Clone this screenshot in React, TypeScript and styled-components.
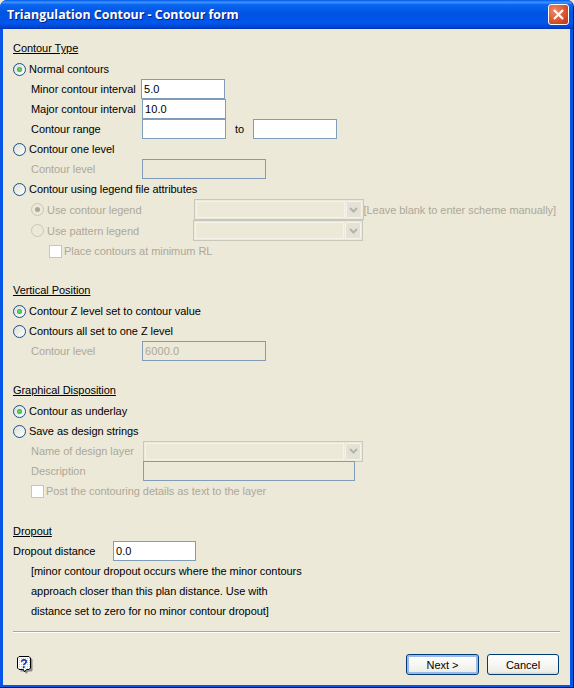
import React from "react";
import styled, { createGlobalStyle } from "styled-components";

const Global = createGlobalStyle`
  html, body {
    margin: 0;
    padding: 0;
    background: #ece9d8;
  }
  body {
    font-family: "Liberation Sans", Arial, sans-serif;
    font-size: 11px;
    letter-spacing: -0.05px;
    color: #000;
  }
`;

const Frame = styled.div`
  width: 574px;
  height: 688px;
  display: flex;
  flex-direction: column;
  box-sizing: border-box;
  background: #0655e6;
  border-radius: 7px 7px 0 0;
  border-right: 1px solid #001a8c;
  border-bottom: 1px solid #001a8c;
  overflow: hidden;
`;

const TitleBar = styled.div`
  height: 29px;
  flex: none;
  display: flex;
  align-items: center;
  justify-content: space-between;
  padding: 0 4px 0 7px;
  background: linear-gradient(
    180deg,
    #0058ee 0%,
    #3d95ff 8%,
    #0a66f0 16%,
    #0054e3 45%,
    #0055eb 80%,
    #0048d0 92%,
    #0033b8 100%
  );
`;

const TitleText = styled.span`
  font-family: "Open Sans", "Liberation Sans", sans-serif;
  font-weight: 700;
  font-size: 12.4px;
  letter-spacing: 0;
  color: #fff;
  text-shadow: 1px 1px 0 #0a1f7a;
`;

const CloseButton = styled.div`
  width: 21px;
  height: 21px;
  box-sizing: border-box;
  border: 1px solid #fff;
  border-radius: 3px;
  background: radial-gradient(circle at 30% 30%, #ee8a6a, #d9502a 60%, #b83512);
  display: flex;
  align-items: center;
  justify-content: center;
`;

const Client = styled.div`
  flex: 1;
  margin: 0 3px 2px 3px;
  padding: 9px 10px 0 10px;
  background: #ece9d8;
  display: flex;
  flex-direction: column;
`;

const Section = styled.div<{ $gap?: number }>`
  display: flex;
  flex-direction: column;
  margin-bottom: ${(p) => p.$gap ?? 0}px;
`;

const Heading = styled.div<{ $tight?: boolean }>`
  height: 20px;
  line-height: 20px;
  text-decoration: underline;
  margin-bottom: ${(p) => (p.$tight ? 0 : 1)}px;
`;

const Row = styled.div<{ $indent?: number; $h?: number }>`
  display: flex;
  align-items: center;
  height: ${(p) => p.$h ?? 20}px;
  padding-left: ${(p) => p.$indent ?? 0}px;
  white-space: nowrap;
`;

const Label = styled.span<{ $w?: number; $off?: boolean }>`
  color: ${(p) => (p.$off ? "#aca899" : "#000")};
  ${(p) => (p.$w ? `width: ${p.$w}px; flex: none;` : "")}
`;

const Field = styled.div<{ $w: number; $off?: boolean }>`
  width: ${(p) => p.$w}px;
  height: 20px;
  flex: none;
  box-sizing: border-box;
  border: 1px solid #7f9db9;
  background: ${(p) => (p.$off ? "#ece9d8" : "#fff")};
  color: ${(p) => (p.$off ? "#aca899" : "#000")};
  padding-left: 2px;
  line-height: 19px;
  font-size: 11px;
  letter-spacing: 0.1px;
`;

const RadioMark = styled.span<{ $checked?: boolean; $off?: boolean }>`
  width: 13px;
  height: 13px;
  flex: none;
  box-sizing: border-box;
  margin-right: 3px;
  border-radius: 50%;
  border: 1px solid ${(p) => (p.$off ? "#c9c6b4" : "#1c5180")};
  background: ${(p) =>
    p.$off ? "#ece9d8" : "linear-gradient(135deg, #dcdcd7, #ffffff)"};
  display: flex;
  align-items: center;
  justify-content: center;

  &::after {
    content: "";
    display: ${(p) => (p.$checked ? "block" : "none")};
    width: 5px;
    height: 5px;
    border-radius: 50%;
    background: ${(p) =>
      p.$off ? "#aca899" : "radial-gradient(circle, #6fdc6f, #21a121)"};
  }
`;

const CheckMark = styled.span`
  width: 13px;
  height: 13px;
  flex: none;
  box-sizing: border-box;
  margin-right: 2px;
  border: 1px solid #c9c6b4;
  background: #fff;
`;

const Combo = styled.div<{ $w: number }>`
  width: ${(p) => p.$w}px;
  height: 21px;
  flex: none;
  box-sizing: border-box;
  border: 1px solid #c9c7ba;
  background: #ece9d8;
  display: flex;
  gap: 1px;
  padding: 1px;
`;

const ComboWell = styled.div`
  flex: 1;
  box-sizing: border-box;
  border: 1px solid #f5f4ec;
`;

const ComboArrow = styled.div`
  width: 16px;
  box-sizing: border-box;
  border: 1px solid #f5f4ec;
  border-radius: 2px;
  background: #e4e2d6;
  display: flex;
  align-items: center;
  justify-content: center;
`;

const Spacer = styled.span<{ $w: number }>`
  width: ${(p) => p.$w}px;
  flex: none;
`;

const To = styled.span`
  width: 27px;
  text-align: center;
  flex: none;
`;

const Rule = styled.div`
  height: 2px;
  background: #aca899;
  border-bottom: 1px solid #fff;
  box-sizing: border-box;
  margin-top: 10px;
`;

const Footer = styled.div`
  display: flex;
  align-items: center;
  margin-top: 21px;
  padding-left: 4px;
  padding-right: 1px;
`;

const Help = styled.div`
  flex: 1;
  display: flex;
`;

const Button = styled.button<{ $default?: boolean }>`
  width: ${(p) => (p.$default ? 73 : 72)}px;
  height: 21px;
  padding: 0;
  margin-left: ${(p) => (p.$default ? 0 : 8)}px;
  box-sizing: border-box;
  border: 1px solid #003c74;
  border-radius: 3px;
  font-family: inherit;
  font-size: 11px;
  color: #000;
  background: linear-gradient(180deg, #ffffff, #f0f0ea 85%, #dcd8c8);
  box-shadow: ${(p) => (p.$default ? "inset 0 0 0 2px #9db8ec" : "none")};
`;

function Radio({
  label,
  checked,
  off,
}: {
  label: string;
  checked?: boolean;
  off?: boolean;
}) {
  return (
    <>
      <RadioMark $checked={checked} $off={off} />
      <Label $off={off}>{label}</Label>
    </>
  );
}

function ComboBox({ w }: { w: number }) {
  return (
    <Combo $w={w}>
      <ComboWell />
      <ComboArrow>
        <svg width="9" height="6" viewBox="0 0 9 6">
          <path d="M1 1 L4.5 4.5 L8 1" fill="none" stroke="#b5b3a6" strokeWidth="2" />
        </svg>
      </ComboArrow>
    </Combo>
  );
}

export default function App() {
  return (
    <>
      <Global />
      <Frame>
        <TitleBar>
          <TitleText>Triangulation Contour - Contour form</TitleText>
          <CloseButton>
            <svg width="13" height="13" viewBox="0 0 13 13">
              <path d="M2 2 L11 11 M11 2 L2 11" stroke="#fff" strokeWidth="2.2" />
            </svg>
          </CloseButton>
        </TitleBar>
        <Client>
          <Section $gap={19}>
            <Heading>Contour Type</Heading>
            <Row>
              <Radio label="Normal contours" checked />
            </Row>
            <Row $indent={18}>
              <Label $w={110}>Minor contour interval</Label>
              <Field $w={84}>5.0</Field>
            </Row>
            <Row $indent={18}>
              <Label $w={111}>Major contour interval</Label>
              <Field $w={84}>10.0</Field>
            </Row>
            <Row $indent={18}>
              <Label $w={111}>Contour range</Label>
              <Field $w={84} />
              <To>to</To>
              <Field $w={84} />
            </Row>
            <Row>
              <Radio label="Contour one level" />
            </Row>
            <Row $indent={18}>
              <Label $w={111} $off>
                Contour level
              </Label>
              <Field $w={124} $off />
            </Row>
            <Row>
              <Radio label="Contour using legend file attributes" />
            </Row>
            <Row $h={21} $indent={18}>
              <Radio label="Use contour legend" checked off />
              <Spacer $w={52} />
              <ComboBox w={170} />
              <Label $off>[Leave blank to enter scheme manually]</Label>
            </Row>
            <Row $h={21} $indent={18}>
              <Radio label="Use pattern legend" off />
              <Spacer $w={54} />
              <ComboBox w={170} />
            </Row>
            <Row $indent={36}>
              <CheckMark />
              <Label $off>Place contours at minimum RL</Label>
            </Row>
          </Section>

          <Section $gap={19}>
            <Heading>Vertical Position</Heading>
            <Row>
              <Radio label="Contour Z level set to contour value" checked />
            </Row>
            <Row>
              <Radio label="Contours all set to one Z level" />
            </Row>
            <Row $indent={18}>
              <Label $w={111} $off>
                Contour level
              </Label>
              <Field $w={124} $off>
                6000.0
              </Field>
            </Row>
          </Section>

          <Section $gap={20}>
            <Heading>Graphical Disposition</Heading>
            <Row>
              <Radio label="Contour as underlay" checked />
            </Row>
            <Row>
              <Radio label="Save as design strings" />
            </Row>
            <Row $indent={18}>
              <Label $w={112} $off>
                Name of design layer
              </Label>
              <ComboBox w={220} />
            </Row>
            <Row $indent={18}>
              <Label $w={112} $off>
                Description
              </Label>
              <Field $w={212} $off />
            </Row>
            <Row $indent={18}>
              <CheckMark />
              <Label $off>Post the contouring details as text to the layer</Label>
            </Row>
          </Section>

          <Section>
            <Heading $tight>Dropout</Heading>
            <Row>
              <Label $w={100}>Dropout distance</Label>
              <Field $w={83}>0.0</Field>
            </Row>
            <Row $indent={18}>[minor contour dropout occurs where the minor contours</Row>
            <Row $indent={18}>approach closer than this plan distance. Use with</Row>
            <Row $indent={18}>distance set to zero for no minor contour dropout]</Row>
          </Section>

          <Rule />

          <Footer>
            <Help>
              <svg width="16" height="18" viewBox="0 0 16 18">
                <defs>
                  <pattern id="helpDots" width="2" height="2" patternUnits="userSpaceOnUse">
                    <rect width="2" height="2" fill="#fff" />
                    <rect width="1" height="1" fill="#e8d830" />
                  </pattern>
                </defs>
                <path
                  d="M3.5 2.5 H14.5 L15.5 3.5 V14.5 L14.5 15.5 H11.5 L9 18 L8 15.5 H3.5 Z"
                  fill="#8c8c8c"
                />
                <path
                  d="M2 .5 H12 L13.5 2 V12 L12 13.5 H9.5 L7.5 16 L6.5 13.5 H2 L.5 12 V2 Z"
                  fill="url(#helpDots)"
                  stroke="#000"
                />
                <text
                  x="7"
                  y="11.5"
                  textAnchor="middle"
                  fontFamily="Liberation Sans"
                  fontWeight="700"
                  fontSize="12"
                  fill="#1a2a9c"
                >
                  ?
                </text>
              </svg>
            </Help>
            <Button $default>Next &gt;</Button>
            <Button>Cancel</Button>
          </Footer>
        </Client>
      </Frame>
    </>
  );
}
